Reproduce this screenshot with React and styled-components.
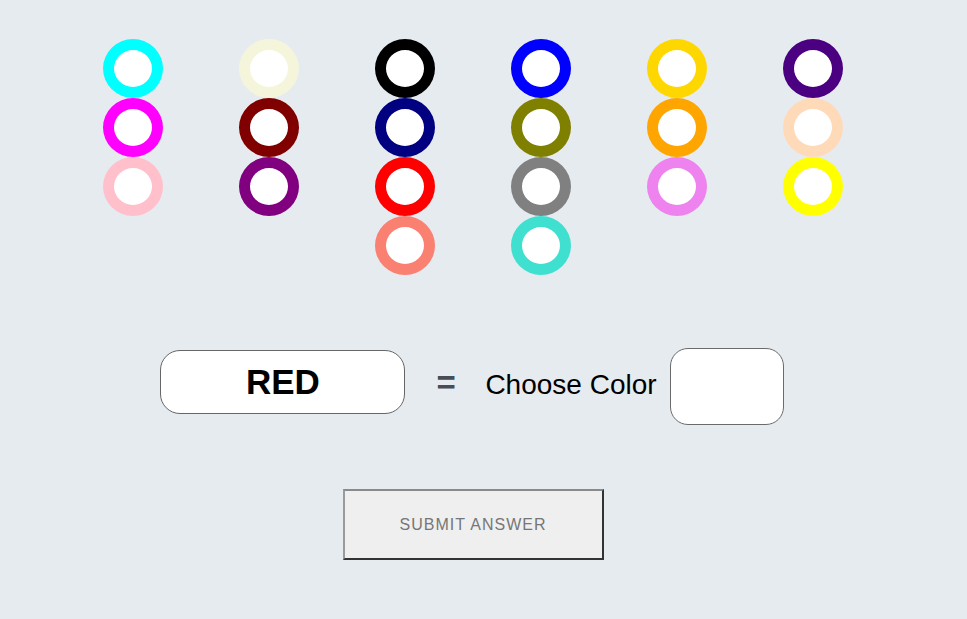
import React from "react";
import styled, { createGlobalStyle } from "styled-components";

const columns = [
  ["cyan", "magenta", "pink"],
  ["beige", "maroon", "purple"],
  ["black", "navy", "red", "salmon"],
  ["blue", "olive", "gray", "turquoise"],
  ["gold", "orange", "violet"],
  ["indigo", "peachpuff", "yellow"],
];

function App() {
  return (
    <Page>
      <GlobalStyle />
      <Palette>
        {columns.map((col, i) => (
          <Column key={i}>
            {col.map((c) => (
              <Swatch key={c} $color={c} />
            ))}
          </Column>
        ))}
      </Palette>

      <Equation>
        <WordBox>RED</WordBox>
        <Equals>=</Equals>
        <Label>Choose Color</Label>
        <ColorBox />
      </Equation>

      <Footer>
        <SubmitButton>SUBMIT ANSWER</SubmitButton>
      </Footer>
    </Page>
  );
}

export default App;

const GlobalStyle = createGlobalStyle`
  body {
    margin: 0;
    background-color: #e6ebf0;
    font-family: "Liberation Sans", Arial, sans-serif;
  }
`;

const Page = styled.div`
  width: 946px;
  padding-top: 39px;
  min-height: 580px;
`;

const Palette = styled.div`
  display: grid;
  grid-template-columns: repeat(6, 136px);
  justify-content: center;
  align-items: start;
`;

const Column = styled.div`
  display: flex;
  flex-direction: column;
  align-items: center;
`;

const Swatch = styled.div`
  box-sizing: border-box;
  width: 60px;
  height: 59px;
  border-radius: 50%;
  border: 11px solid ${(p) => p.$color};
  background-color: #fff;
`;

const Equation = styled.div`
  display: flex;
  justify-content: center;
  align-items: center;
  margin-top: 73px;
  margin-left: -2px;
`;

const WordBox = styled.div`
  box-sizing: border-box;
  width: 245px;
  height: 64px;
  margin-bottom: 9px;
  border: 1.5px solid #666;
  border-radius: 20px;
  background-color: #fff;
  display: flex;
  align-items: center;
  justify-content: center;
  font-size: 35px;
  font-weight: bold;
  color: #000;
`;

const Equals = styled.span`
  margin-left: 31px;
  width: 19px;
  font-size: 33px;
  font-weight: bold;
  color: #474d57;
  margin-bottom: 9px;
  line-height: 1;
`;

const Label = styled.span`
  margin-left: 30px;
  font-size: 28px;
  color: #000;
  margin-bottom: 4px;
`;

const ColorBox = styled.div`
  box-sizing: border-box;
  margin-left: 13px;
  width: 114px;
  height: 77px;
  border: 1.5px solid #6b6b6b;
  border-radius: 18px;
  background-color: #fff;
`;

const Footer = styled.div`
  display: flex;
  justify-content: center;
  margin-top: 64px;
`;

const SubmitButton = styled.button`
  box-sizing: border-box;
  width: 261px;
  height: 71px;
  background-color: #efefef;
  border: 2px solid;
  border-color: #8a8a8a #333 #333 #9a9a9a;
  font-family: "Liberation Sans", Arial, sans-serif;
  font-size: 16px;
  letter-spacing: 1px;
  color: #767676;
  cursor: pointer;
`;
